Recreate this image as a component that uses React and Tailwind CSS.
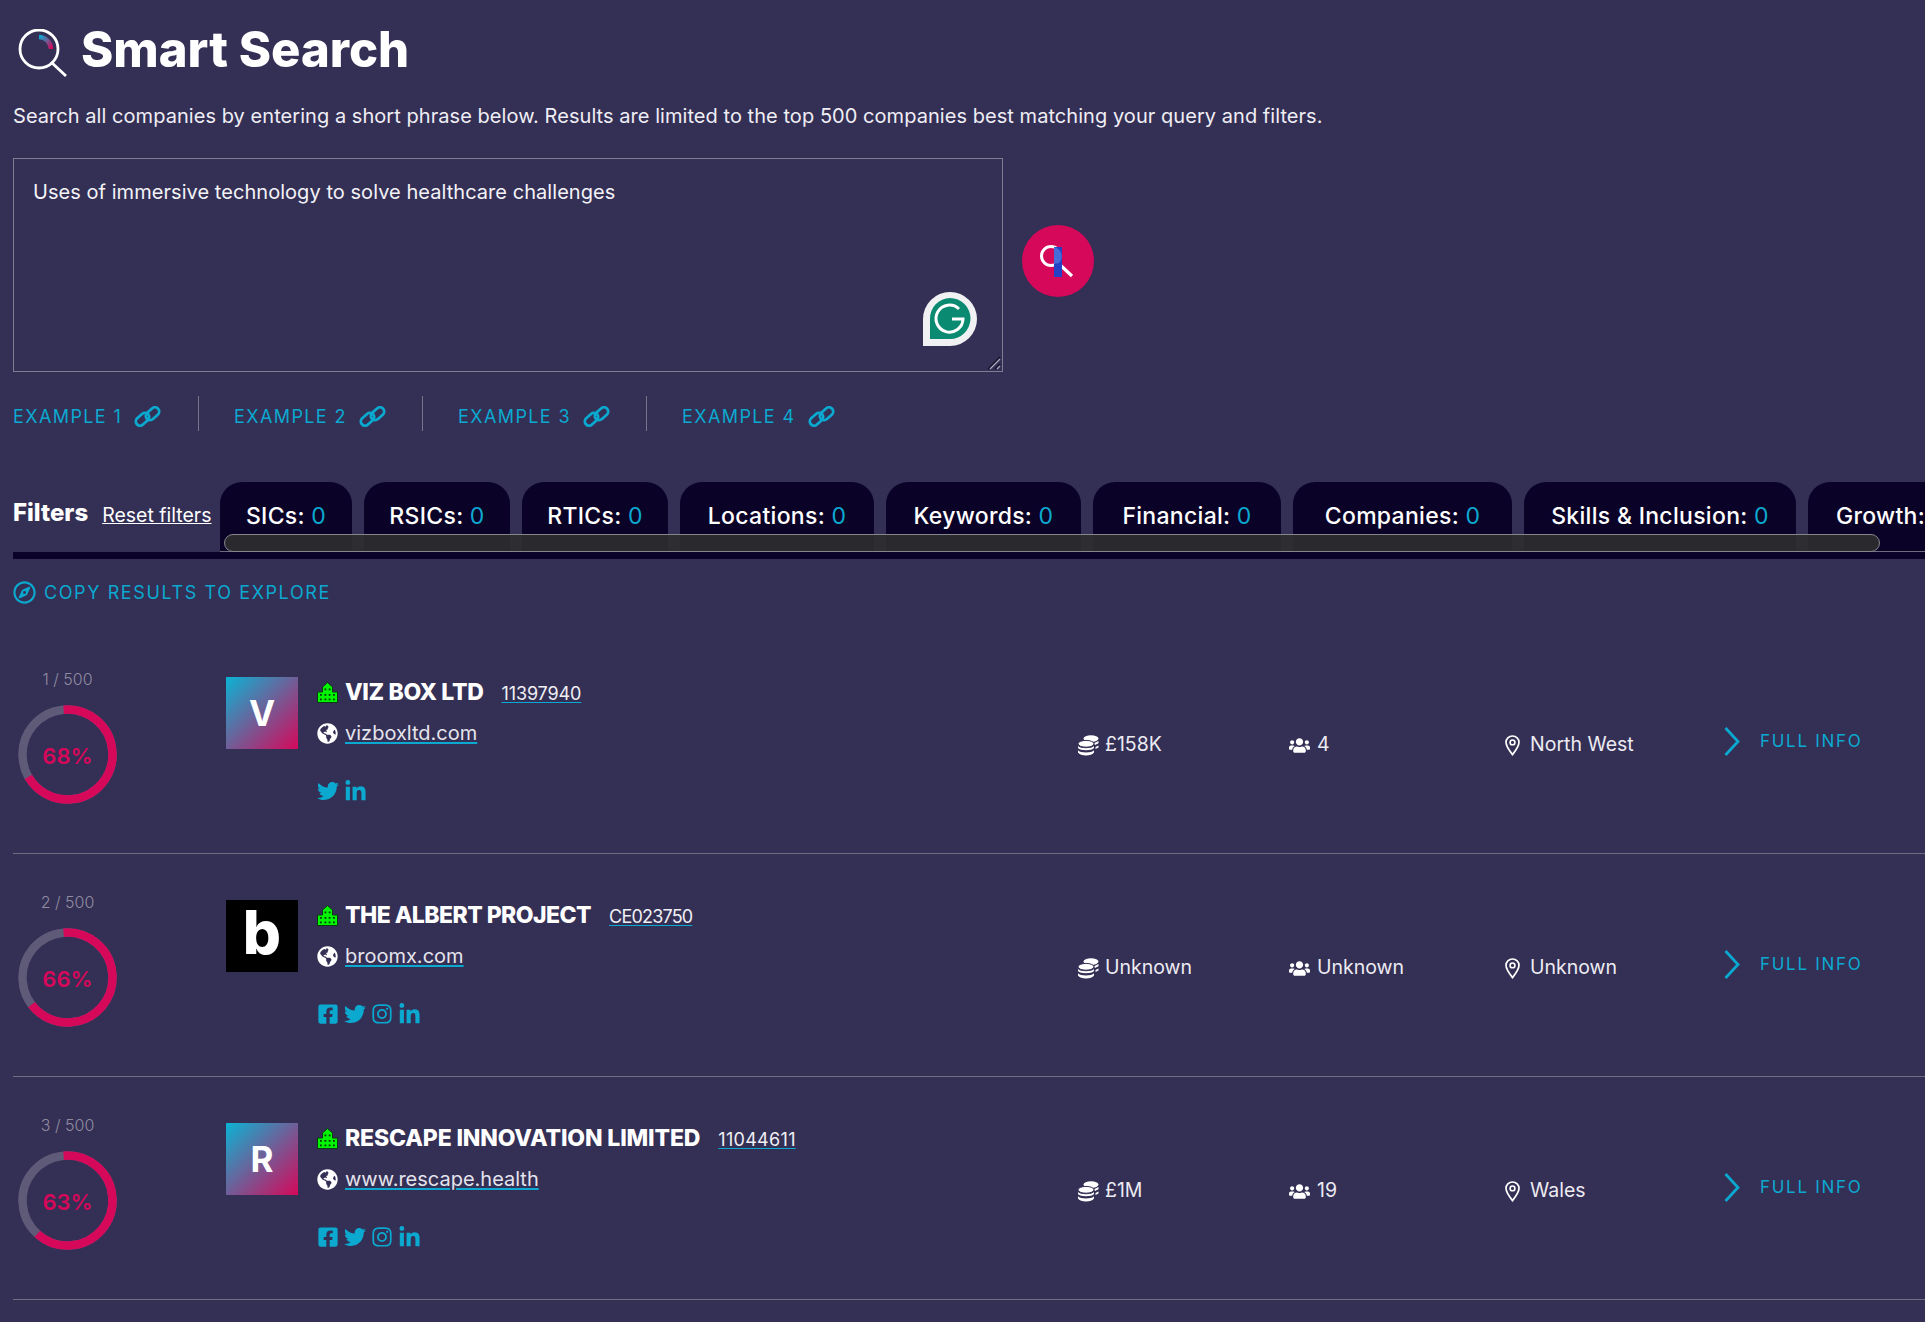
import React from "react";
import { FaFacebookSquare, FaTwitter, FaInstagram, FaLinkedinIn, FaGlobeAmericas, FaUsers, FaRegCompass } from "react-icons/fa";

function TitleIcon() {
  return (
    <svg width="49" height="48" viewBox="0 0 49 48" fill="none" className="shrink-0">
      <defs>
        <linearGradient id="tg" x1="0" y1="0" x2="1" y2="1">
          <stop offset="0" stopColor="#0ba9d0" />
          <stop offset="1" stopColor="#d6085a" />
        </linearGradient>
      </defs>
      <circle cx="21" cy="20" r="19" stroke="#fff" strokeWidth="2.8" />
      <path d="M33 33 L48 47" stroke="#fff" strokeWidth="2.8" />
      <path d="M21 8 A12.5 12.5 0 0 1 33 20" stroke="url(#tg)" strokeWidth="4.5" />
    </svg>
  );
}

function SearchGlyph() {
  return (
    <svg width="72" height="72" viewBox="0 0 72 72" fill="none">
      <circle cx="29" cy="31" r="9.5" stroke="#fff" strokeWidth="3" />
      <path d="M36 38 L50 51" stroke="#fff" strokeWidth="3.2" />
      <rect x="32" y="22" width="8" height="30" fill="#2440c4" />
      <path d="M32 22 A9.5 9.5 0 0 1 37 38 L32 39 Z" fill="#5d8be8" opacity="0.6" />
    </svg>
  );
}

function Grammarly() {
  return (
    <svg width="54" height="54" viewBox="0 0 54 54" fill="none">
      <path d="M27 0 A27 27 0 1 1 27 54 H0 V27 A27 27 0 0 1 27 0Z" fill="#f1f1f3" />
      <path d="M27 6 A20.5 20.5 0 1 1 27 47 H7 V27 A20.5 20.5 0 0 1 27 6Z" fill="#0b8a72" />
      <path d="M36 17 A13.5 13.5 0 1 0 40 27 H29" stroke="#fff" strokeWidth="3" />
    </svg>
  );
}

function LinkIcon() {
  return (
    <svg width="29" height="21" viewBox="0 0 29 21" fill="none" className="shrink-0">
      <rect x="2" y="9" width="15" height="8.5" rx="4.25" transform="rotate(-42 9.5 13.25)" stroke="#0ba9d0" strokeWidth="2.8" />
      <rect x="12" y="3.5" width="15" height="8.5" rx="4.25" transform="rotate(-42 19.5 7.75)" stroke="#0ba9d0" strokeWidth="2.8" />
    </svg>
  );
}

function Building() {
  return (
    <svg width="21" height="21" viewBox="0 0 21 21" className="shrink-0">
      <path d="M0.5 20.5 V10 H5.5 V5 L10.5 0.5 L15.5 5 V10 H20.5 V20.5 Z" fill="#00f500" stroke="#0a3a12" strokeWidth="1" />
      <g fill="#063a10">
        <rect x="7.5" y="6.5" width="1.8" height="1.8" />
        <rect x="11.7" y="6.5" width="1.8" height="1.8" />
        <rect x="3" y="12" width="1.8" height="1.8" />
        <rect x="7.5" y="12" width="1.8" height="1.8" />
        <rect x="11.7" y="12" width="1.8" height="1.8" />
        <rect x="16" y="12" width="1.8" height="1.8" />
        <rect x="3" y="16.5" width="1.8" height="1.8" />
        <rect x="7.5" y="16.5" width="1.8" height="1.8" />
        <rect x="11.7" y="16.5" width="1.8" height="1.8" />
        <rect x="16" y="16.5" width="1.8" height="1.8" />
      </g>
    </svg>
  );
}

function Coins() {
  return (
    <svg width="22" height="21" viewBox="0 0 22 21" fill="#fff" className="shrink-0">
      <ellipse cx="14" cy="3.6" rx="7.5" ry="3.4" />
      <path d="M17 8.2 L21.5 6 V8.2 L18 10 Z" />
      <path d="M18.5 12 L21.5 10.4 V12.6 L18.5 14 Z" />
      <ellipse cx="9" cy="8.8" rx="8" ry="3.4" stroke="#342f55" strokeWidth="1" />
      <path d="M1 11 C3 14 15 14 17 11 V13 C15 16 3 16 1 13 Z" />
      <path d="M1 15.2 C3 18.2 15 18.2 17 15.2 V17.4 C15 21.4 3 21.4 1 17.4 Z" />
    </svg>
  );
}

function Pin() {
  return (
    <svg width="15" height="21" viewBox="0 0 15 21" fill="none" className="shrink-0">
      <path d="M7.5 1 C3.8 1 1 3.8 1 7.3 C1 11.5 7.5 19.6 7.5 19.6 C7.5 19.6 14 11.5 14 7.3 C14 3.8 11.2 1 7.5 1Z" stroke="#fff" strokeWidth="1.7" />
      <circle cx="7.5" cy="7.4" r="2.4" stroke="#fff" strokeWidth="1.6" />
    </svg>
  );
}

function Chevron() {
  return (
    <svg width="16" height="29" viewBox="0 0 16 29" fill="none" className="shrink-0">
      <path d="M1.5 1 L14 14.5 L1.5 28" stroke="#0ba9d0" strokeWidth="2.8" />
    </svg>
  );
}

function ResizeHandle() {
  return (
    <svg width="14" height="14" viewBox="0 0 14 14" fill="none">
      <path d="M1 13 L13 1" stroke="#15122a" strokeWidth="1.4" />
      <path d="M3 13 L13 3" stroke="#a9a7b8" strokeWidth="1.2" />
      <path d="M8 13 L13 8" stroke="#15122a" strokeWidth="1.4" />
      <path d="M10 13 L13 10" stroke="#a9a7b8" strokeWidth="1.2" />
    </svg>
  );
}

function Ring({ pct }) {
  const r = 45;
  const c = 2 * Math.PI * r;
  return (
    <div className="relative w-[99px] h-[99px]">
      <svg width="99" height="99" viewBox="0 0 99 99" fill="none" className="-rotate-[95deg]">
        <circle cx="49.5" cy="49.5" r={r} stroke="#5f5a78" strokeWidth="8.5" />
        <circle cx="49.5" cy="49.5" r={r} stroke="#d6085a" strokeWidth="8.5" strokeDasharray={`${(c * pct) / 100} ${c}`} />
      </svg>
      <div className="absolute inset-0 flex items-center justify-center pt-[3px] text-[22px] font-semibold text-[#d6085a]">{pct}%</div>
    </div>
  );
}

const tabs = [
  ["SICs:", "w-[132px]"],
  ["RSICs:", "w-[146px]"],
  ["RTICs:", "w-[146px]"],
  ["Locations:", "w-[194px]"],
  ["Keywords:", "w-[195px]"],
  ["Financial:", "w-[188px]"],
  ["Companies:", "w-[219px]"],
  ["Skills & Inclusion:", "w-[272px]"],
];

const rows = [
  { rank: 1, pct: 68, name: "VIZ BOX LTD", nameCls: "tracking-[-0.35px]", id: "11397940", idCls: "tracking-[-0.1px]", url: "vizboxltd.com", letter: "V", socials: ["tw", "in"], money: "£158K", people: "4", loc: "North West" },
  { rank: 2, pct: 66, name: "THE ALBERT PROJECT", nameCls: "tracking-[-0.55px]", id: "CE023750", idCls: "tracking-[-0.8px]", url: "broomx.com", letter: "b", socials: ["fb", "tw", "ig", "in"], money: "Unknown", people: "Unknown", loc: "Unknown" },
  { rank: 3, pct: 63, name: "RESCAPE INNOVATION LIMITED", nameCls: "tracking-[-0.15px]", id: "11044611", idCls: "tracking-[0.3px]", url: "www.rescape.health", letter: "R", socials: ["fb", "tw", "ig", "in"], money: "£1M", people: "19", loc: "Wales" },
];

function Social({ kind }) {
  if (kind === "fb") return <FaFacebookSquare size={22} />;
  if (kind === "tw") return <FaTwitter size={22} />;
  if (kind === "ig") return <FaInstagram size={22} />;
  return <FaLinkedinIn size={23} />;
}

function Row({ r }) {
  return (
    <div className="flex h-[223px] border-b border-[#6f6c80]">
      <div className="w-[109px] shrink-0 flex flex-col items-center pt-[38px]">
        <div className="h-[20px] leading-[20px] text-[16px] font-light text-[#8f8ca0] whitespace-pre">{r.rank} / 500</div>
        <div className="mt-[16px]"><Ring pct={r.pct} /></div>
      </div>
      <div className="w-[104px] shrink-0" />
      <div className="w-[91px] shrink-0 pt-[46px]">
        {r.letter === "b" ? (
          <div className="w-[72px] h-[72px] bg-black flex items-center justify-center text-white font-extrabold text-[60px] leading-none pb-[8px]">b</div>
        ) : (
          <div className="w-[72px] h-[72px] bg-linear-to-br/srgb from-[#0bb3d4] to-[#d6085a] flex items-center justify-center text-white font-bold text-[35px] leading-none">{r.letter}</div>
        )}
      </div>
      <div className="w-[760px] shrink-0 pt-[46px]">
        <div className="flex items-center h-[30px]">
          <Building />
          <span className={`ml-[7px] text-[23px] font-extrabold text-white whitespace-nowrap ${r.nameCls}`}>{r.name}</span>
          <span className={`ml-[18px] mt-[3px] text-[18px] text-[#f0f0f4] underline decoration-[#0ba9d0] underline-offset-2 whitespace-nowrap ${r.idCls}`}>{r.id}</span>
        </div>
        <div className="flex items-center h-[30px] mt-[11px]">
          <FaGlobeAmericas size={21} color="#fff" className="shrink-0" />
          <span className="ml-[7px] text-[20px] font-normal text-[#e4e4ec] underline decoration-[#0ba9d0] underline-offset-2">{r.url}</span>
        </div>
        <div className="flex items-center gap-[5px] h-[22px] mt-[32px] text-[#0ba9d0]">
          {r.socials.map((s) => <Social key={s} kind={s} />)}
        </div>
      </div>
      <div className="w-[212px] shrink-0 flex items-center h-[30px] mt-[99px] text-[19.5px] font-normal text-[#ecebf2]">
        <Coins /><span className="ml-[6px]">{r.money}</span>
      </div>
      <div className="w-[216px] shrink-0 flex items-center h-[30px] mt-[99px] text-[19.5px] font-normal text-[#ecebf2]">
        <FaUsers size={21} color="#fff" className="shrink-0" /><span className="ml-[7px]">{r.people}</span>
      </div>
      <div className="w-[219px] shrink-0 flex items-center h-[30px] mt-[99px] text-[19.5px] font-normal text-[#ecebf2]">
        <Pin /><span className="ml-[10px]">{r.loc}</span>
      </div>
      <div className="flex items-center h-[29px] mt-[96px]">
        <Chevron />
        <span className="ml-[20px] text-[17px] font-normal tracking-[1.7px] text-[#0ba9d0] whitespace-nowrap">FULL INFO</span>
      </div>
    </div>
  );
}

function Example({ label }) {
  return (
    <div className="flex items-center mt-[5px]">
      <span>{label}</span>
      <span className="ml-[11px]"><LinkIcon /></span>
    </div>
  );
}

export default function App() {
  return (
    <div className="h-[1322px] overflow-hidden bg-[#342f55] pl-[13px] font-['Inter',sans-serif] text-white">
      <div className="flex items-start pt-[29px] pl-[5px]">
        <TitleIcon />
        <h1 className="ml-[14px] -mt-[3px] text-[49px] leading-[48px] font-extrabold text-white whitespace-nowrap">Smart Search</h1>
      </div>
      <p className="mt-[24px] h-[30px] text-[20px] leading-[30px] font-normal text-[#efeef4] whitespace-nowrap tracking-[0.05px]">
        Search all companies by entering a short phrase below. Results are limited to the top 500 companies best matching your query and filters.
      </p>
      <div className="mt-[27px] flex items-center">
        <div className="relative w-[990px] h-[214px] shrink-0">
          <textarea
            readOnly
            defaultValue="Uses of immersive technology to solve healthcare challenges"
            className="block w-full h-full bg-transparent border border-[#807d92] px-[19px] py-[18px] text-[20px] leading-[30px] font-normal text-[#f3f3f7] outline-none resize-none tracking-[0.05px]"
          />
          <div className="absolute right-[26px] bottom-[26px]"><Grammarly /></div>
          <div className="absolute right-[2px] bottom-[2px] w-[14px] h-[14px]"><ResizeHandle /></div>
        </div>
        <button className="ml-[19px] mb-[8px] w-[72px] h-[72px] rounded-full bg-[#d6085a] flex items-center justify-center">
          <SearchGlyph />
        </button>
      </div>
      <div className="mt-[24px] flex items-center h-[35px] text-[#0ba9d0] text-[18px] font-normal tracking-[1.4px]">
        <div className="flex items-center w-[186px] h-full border-r border-[#77748a]">
          <Example label="EXAMPLE 1" />
        </div>
        <div className="flex items-center w-[224px] h-full pl-[35px] border-r border-[#77748a]">
          <Example label="EXAMPLE 2" />
        </div>
        <div className="flex items-center w-[224px] h-full pl-[35px] border-r border-[#77748a]">
          <Example label="EXAMPLE 3" />
        </div>
        <div className="flex items-center h-full pl-[35px]">
          <Example label="EXAMPLE 4" />
        </div>
      </div>
      <div className="mt-[51px] flex border-b-[7px] border-[#0b0228] h-[77px]">
        <div className="w-[207px] shrink-0 flex items-start">
          <span className="mt-[16px] text-[24px] leading-[30px] font-extrabold text-white">Filters</span>
          <span className="ml-[14px] mt-[19px] text-[19.5px] leading-[28px] font-normal underline text-white whitespace-nowrap">Reset filters</span>
        </div>
        <div className="relative flex-1 min-w-0 h-[70px] overflow-hidden">
          <div className="flex gap-[12px] h-full">
            {tabs.map(([label, w]) => (
              <div key={label} className={`${w} shrink-0 h-full rounded-t-[22px] bg-[#0b0228] pt-[19px] text-center text-[23px] leading-[30px] font-medium tracking-[0.3px] text-white whitespace-nowrap`}>
                {label} <span className="font-normal text-[#0ba9d0]">0</span>
              </div>
            ))}
            <div className="w-[200px] shrink-0 h-full rounded-t-[22px] bg-[#0b0228] pt-[19px] pl-[28px] text-[23px] leading-[30px] font-medium tracking-[0.3px] text-white whitespace-nowrap">Growth: <span className="font-normal text-[#0ba9d0]">0</span></div>
          </div>
          <div className="absolute left-0 right-0 bottom-0 h-px bg-[#6f6c80]" />
          <div className="absolute left-[4px] top-[52px] w-[1656px] h-[18px] rounded-full bg-[#2e2e2e]/90 border border-[#85858a]" />
        </div>
      </div>
      <div className="mt-[21px] flex items-center h-[24px] text-[#0ba9d0]">
        <FaRegCompass size={23} className="shrink-0" />
        <span className="ml-[8px] text-[18px] font-normal tracking-[1.6px] whitespace-nowrap">COPY RESULTS TO EXPLORE</span>
      </div>
      <div className="mt-[27px]">
        {rows.map((r) => <Row key={r.rank} r={r} />)}
      </div>
    </div>
  );
}
